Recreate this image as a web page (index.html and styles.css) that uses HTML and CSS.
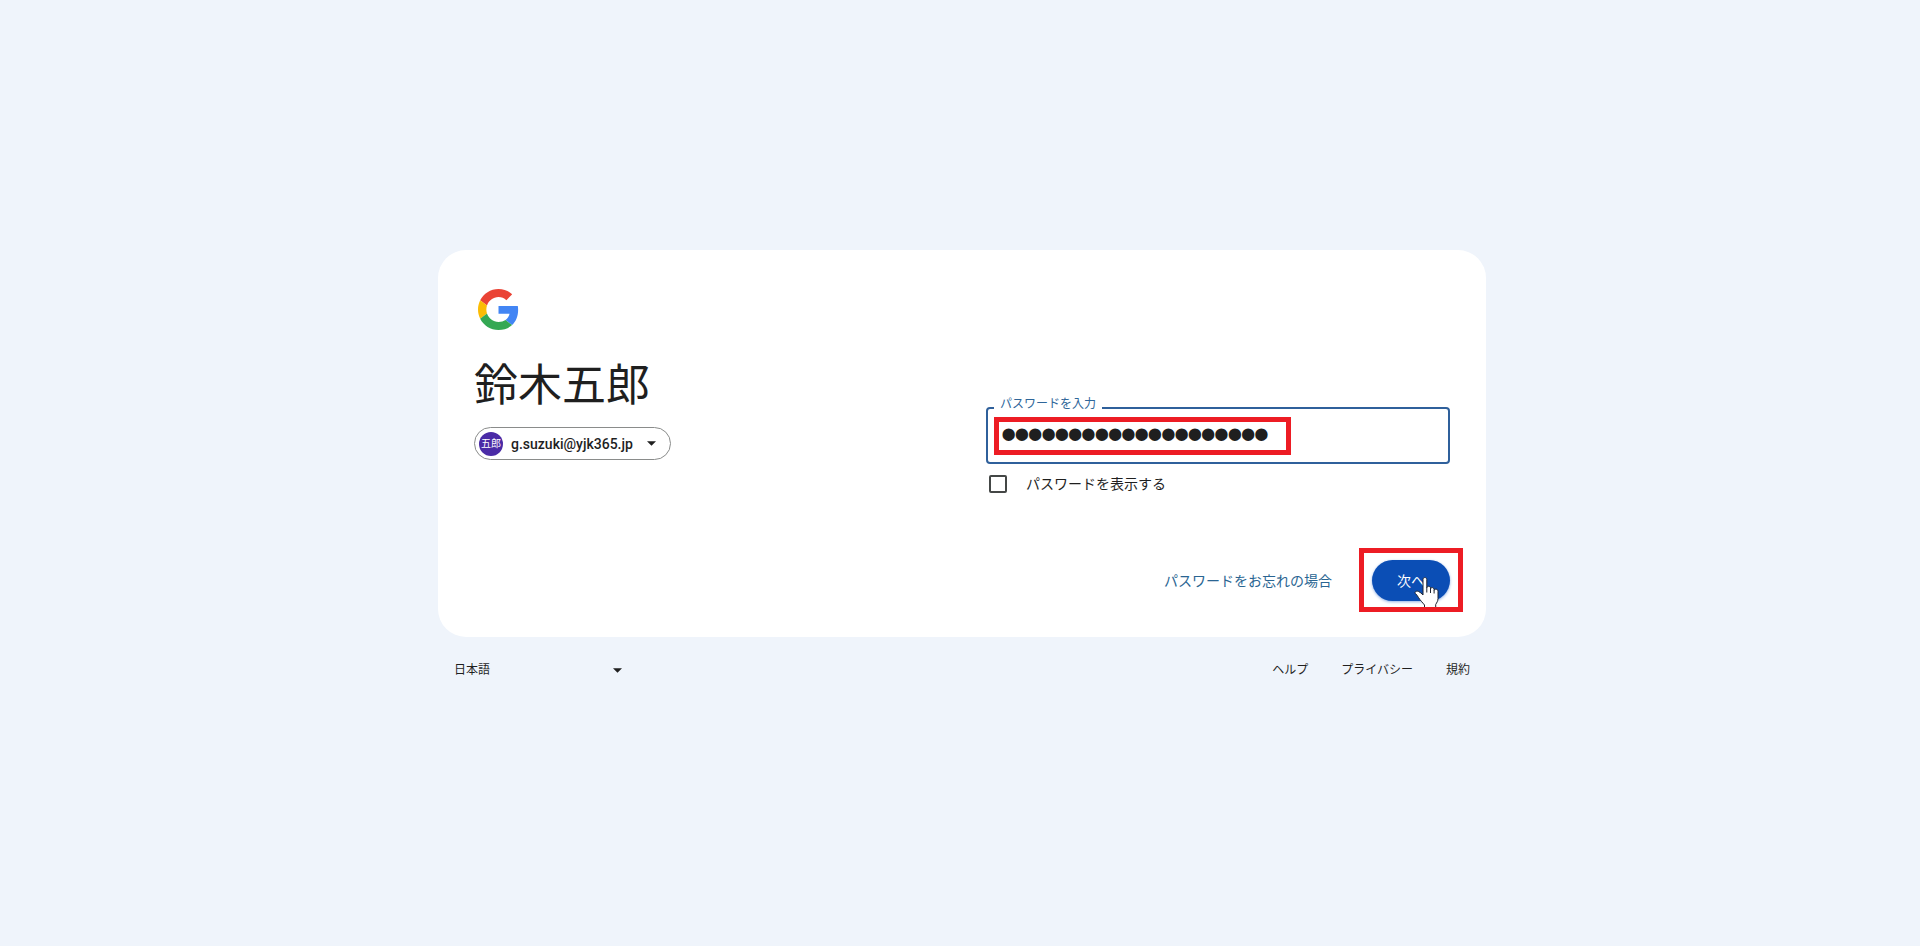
FILE: index.html
```html
<!DOCTYPE html>
<html lang="ja">
<head>
<meta charset="utf-8">
<meta name="viewport" content="width=device-width, initial-scale=1">
<title>ログイン</title>
<link rel="stylesheet" href="styles.css">
</head>
<body>
<div class="page">
  <main class="card">
    <section class="identity">
      <svg class="logo" viewBox="0 0 48 48" role="img" aria-label="Google">
        <path fill="#ea4335" d="M24 9.5c3.54 0 6.71 1.22 9.21 3.6l6.85-6.85C35.9 2.38 30.47 0 24 0 14.62 0 6.51 5.38 2.56 13.22l7.98 6.19C12.43 13.72 17.74 9.5 24 9.5z"/>
        <path fill="#4285f4" d="M46.98 24.55c0-1.57-.15-3.09-.38-4.55H24v9.02h12.94c-.58 2.96-2.26 5.48-4.78 7.18l7.73 6c4.51-4.18 7.09-10.36 7.09-17.65z"/>
        <path fill="#fbbc05" d="M10.53 28.59c-.48-1.45-.76-2.99-.76-4.59s.27-3.14.76-4.59l-7.98-6.19C.92 16.46 0 20.12 0 24c0 3.88.92 7.54 2.56 10.78l7.97-6.19z"/>
        <path fill="#34a853" d="M24 48c6.48 0 11.93-2.13 15.89-5.81l-7.73-6c-2.15 1.45-4.92 2.3-8.16 2.3-6.26 0-11.57-4.22-13.47-9.91l-7.98 6.19C6.51 42.62 14.62 48 24 48z"/>
      </svg>
      <h1 class="name">鈴木五郎</h1>
      <button class="account" type="button">
        <span class="avatar">五郎</span>
        <span class="email">g.suzuki@yjk365.jp</span>
        <svg class="caret" viewBox="0 0 10 5" aria-hidden="true"><path d="M0 0h10L5 5z"/></svg>
      </button>
    </section>
    <form class="form">
      <div class="field">
        <label class="field-label" for="password">パスワードを入力</label>
        <input class="password" id="password" type="password" value="12345678901234567890">
        <span class="frame frame-field"></span>
      </div>
      <div class="show">
        <input class="check" id="show" type="checkbox">
        <label for="show">パスワードを表示する</label>
      </div>
      <div class="actions">
        <a class="forgot" href="#">パスワードをお忘れの場合</a>
        <div class="next-wrap">
          <button class="next" type="button">次へ</button>
          <svg class="pointer" viewBox="0 0 26 31" aria-hidden="true"><path d="M9 2.5c0-2.6 3.8-2.6 3.8 0v8.3c.4-2.1 3.5-2 3.7.2v.8c.5-1.8 3.4-1.6 3.6.4v1c.7-1.6 3.900-1.400 3.900 1.100v7.200c0 2.600-1.200 4-2.300 6v3H10.500v-2.500C8.500 25.500 6 23 4.500 20.500 3.400 18.700 2.500 17.500 1.300 16.400.2 14.800 2.800 13.500 4.600 14.500 6.300 15.200 7.500 16.500 9 18z"/><path class="pointer-line" d="M12.800 10.500v5M16.500 11.500v4.500M20.100 13v3.500"/></svg>
          <span class="frame frame-next"></span>
        </div>
      </div>
    </form>
  </main>
  <footer class="footer">
    <button class="language" type="button">
      <span>日本語</span>
      <svg class="caret" viewBox="0 0 10 5" aria-hidden="true"><path d="M0 0h10L5 5z"/></svg>
    </button>
    <nav class="links">
      <a href="#">ヘルプ</a>
      <a href="#">プライバシー</a>
      <a href="#">規約</a>
    </nav>
  </footer>
</div>
</body>
</html>
```

FILE: styles.css
```css
* {
  box-sizing: border-box;
}

body {
  margin: 0;
  padding-left: 4px;
  background: #eff4fb;
  color: #1f1f1f;
  font: 14px/20px Roboto, "Noto Sans CJK JP", sans-serif;
}

button,
input {
  font: inherit;
  color: inherit;
}

a {
  color: inherit;
  text-decoration: none;
}

.page {
  display: flex;
  flex-direction: column;
  justify-content: center;
  width: calc(100% - 32px);
  max-width: 1048px;
  min-height: 100vh;
  margin: 0 auto;
}

.card {
  display: grid;
  grid-template-columns: 1fr 1fr;
  gap: 48px;
  padding: 36px;
  border-radius: 28px;
  background: #fff;
}

.identity {
  display: flex;
  flex-direction: column;
  align-items: flex-start;
}

.logo {
  width: 41px;
  height: 41px;
  margin: 3px 4px 4px;
}

.name {
  margin: 26px 0 15px;
  font-size: 44px;
  line-height: 52px;
  font-weight: 400;
}

.account {
  display: flex;
  align-items: center;
  gap: 8px;
  height: 33px;
  padding: 0 14px 0 4px;
  border: 1px solid #8a8c8b;
  border-radius: 17px;
  background: #fff;
}

.avatar {
  width: 24px;
  border-radius: 50%;
  background: #4a2ba6;
  color: #fff;
  font-size: 10px;
  line-height: 24px;
  text-align: center;
}

.email {
  font-size: 14px;
  font-weight: 500;
}

.caret {
  width: 9px;
  height: 5px;
  margin-left: 6px;
  fill: #1f1f1f;
}

.form {
  padding-top: 121px;
}

.field {
  position: relative;
}

.field-label {
  position: absolute;
  top: -13px;
  left: 8px;
  padding: 0 6px;
  background: #fff;
  color: #2f6699;
  font-size: 12px;
}

.password {
  display: block;
  width: 100%;
  height: 57px;
  padding: 0 14px;
  border: 2px solid #2f609b;
  border-radius: 4px;
  outline: 0;
  background: #fff;
  font-family: "Liberation Sans", sans-serif;
  font-size: 38px;
  -webkit-text-stroke: 2px #1f1f1f;
}

.frame {
  position: absolute;
  border: 5px solid #ed1c24;
  pointer-events: none;
}

.frame-field {
  top: 10px;
  left: 8px;
  width: 297px;
  height: 38px;
}

.show {
  display: flex;
  align-items: center;
  gap: 19px;
  padding: 10px 3px;
}

.check {
  appearance: none;
  width: 18px;
  height: 18px;
  margin: 0;
  border: 2px solid #444746;
  border-radius: 2px;
}

.actions {
  display: flex;
  align-items: center;
  justify-content: flex-end;
  gap: 40px;
  margin-top: 56px;
}

.forgot {
  color: #2a6592;
}

.next-wrap {
  position: relative;
}

.next {
  display: block;
  height: 41px;
  padding: 0 25px;
  border: 0;
  border-radius: 21px;
  background: #0b4eb5;
  color: #fff;
  box-shadow: 0 1px 3px #8fb0e6;
}

.pointer {
  position: absolute;
  top: 17px;
  left: 42px;
  width: 26px;
  height: 31px;
  fill: #fff;
  stroke: #1f2430;
  stroke-width: 1;
}

.pointer-line {
  fill: none;
}

.frame-next {
  inset: -12px -13px -11px -13px;
}

.footer {
  display: flex;
  align-items: center;
  justify-content: space-between;
  padding: 23px 16px 16px;
  font-size: 12px;
}

.language {
  display: flex;
  align-items: center;
  justify-content: space-between;
  width: 168px;
  padding: 0;
  border: 0;
  background: none;
}

.links {
  display: flex;
  gap: 33px;
}
```
